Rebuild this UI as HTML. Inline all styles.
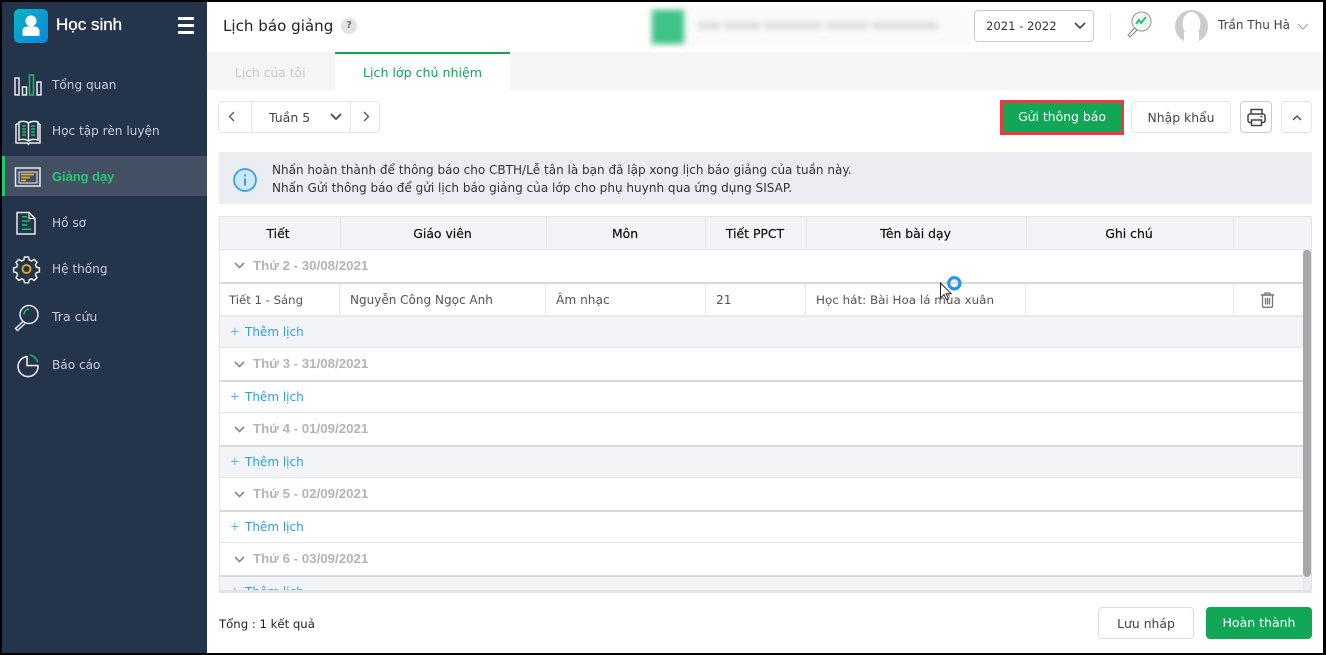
<!DOCTYPE html>
<html lang="vi"><head><meta charset="utf-8"><title>Lịch báo giảng</title>
<style>
*{box-sizing:border-box}
html,body{margin:0;padding:0;width:1326px;height:655px;overflow:hidden;background:#000}
body{font-family:"DejaVu Sans","Liberation Sans",sans-serif;font-size:12px;color:#333}
#app{position:absolute;left:2px;top:2px;width:1321px;height:651px;background:#fff;overflow:hidden}
.a{position:absolute}
.t{position:absolute;white-space:nowrap;line-height:18px}
svg{position:absolute;overflow:visible}
.nav{color:#c9ced6;font-size:12.1px;left:50px}
.th{position:absolute;top:0;height:33px;line-height:33px;text-align:center;font-weight:400;font-size:12.4px;color:#111;border-right:1px solid #e6e8ec;-webkit-text-stroke:.2px #111;padding-right:2px}
.g{position:absolute;left:0;width:1084px;background:#fff;border-bottom:2px solid #d9d9d9}
.gt{position:absolute;left:33px;font-weight:700;color:#b4b4b4;line-height:18px;white-space:nowrap;font-family:"Liberation Sans",sans-serif;font-size:13.3px}
.add{position:absolute;left:0;width:1084px;height:31px;border-bottom:1px solid #e4e4e4;color:#2a9fe8;font-size:12px}
.add span{position:absolute;left:25px;top:6px;line-height:18px;white-space:nowrap}
.add i{position:absolute;left:10px;top:5px;font-style:normal;line-height:18px;font-size:11.5px;color:#58b4ee}
.btn{position:absolute;border:1px solid #e2e4e8;border-radius:4px;background:#fff;text-align:center;color:#444;font-size:12.4px}
.cell{position:absolute;top:0;height:31px;line-height:32px;color:#555;font-size:12.2px;white-space:nowrap;border-right:1px solid #e8e8e8}
.bar{position:absolute;top:20px;height:7px;background:#dcdcdc;filter:blur(3px)}
</style></head><body>
<div id="app">
<!-- sidebar -->
<div class="a" style="left:0;top:0;width:205px;height:651px;background:#24344b"></div>
<div class="a" style="left:0;top:154px;width:205px;height:40px;background:#435064"></div>
<div class="a" style="left:0;top:154px;width:3px;height:40px;background:#1ecb6b"></div>
<div class="a" style="left:12px;top:7px;width:34px;height:34px;border-radius:5px;background:linear-gradient(135deg,#0db4c4,#0a86e0)"></div>
<svg style="left:12px;top:7px" width="34" height="34"><circle cx="17" cy="12" r="5.5" fill="#fff"/><path d="M8.500 26v-4c0-3 2.500-4.500 5-4.500h7c2.500 0 5 1.500 5 4.500v4c0 .6-.4 .9-1 .9H9.500c-.6 0-1-.3-1-.9z" fill="#fff"/></svg>
<div class="t" style="left:54px;top:14px;color:#fff;-webkit-text-stroke:.3px #fff;font-family:'Liberation Sans',sans-serif;font-size:17px">Học sinh</div>
<div class="a" style="left:176px;top:15px;width:16px;height:3px;background:#fff"></div>
<div class="a" style="left:176px;top:22px;width:16px;height:3px;background:#fff"></div>
<div class="a" style="left:176px;top:29px;width:16px;height:3px;background:#fff"></div>

<svg style="left:0;top:0" width="205" height="400" fill="none" stroke="#e8eaee" stroke-width="1.500">
<!-- Tong quan -->
<rect x="13" y="76" width="4" height="17"/><rect x="20.500" y="85" width="4" height="8"/>
<rect x="27.500" y="73" width="4" height="20" stroke="#18c067"/><rect x="35" y="80" width="4" height="13"/>
<!-- Hoc tap -->
<path d="M14 122h3M38 122h-2M14 122v19h11.500l1 1.500 1-1.500H38v-19"/><path d="M17 120c3-1 7-1 9.500 1 2.500-2 6.500-2 9.500-1v18c-3-1-7-1-9.500 1-2.500-2-6.500-2-9.500-1z"/>
<path d="M20 124h4M20 127h4M20 130h4M20 133h4M29 124h4M29 127h4M29 130h4M29 133h4" stroke="#18c067" stroke-width="1.600"/>
<path d="M26.500 121v18"/>
<!-- Giang day -->
<rect x="13.500" y="166" width="24.500" height="18"/><rect x="17" y="170" width="18" height="11" stroke-width="1"/>
<path d="M19 172.500h13M19 175.500h9M19 178.500h5" stroke="#e2ad1d" stroke-width="1.800"/>
<!-- Ho so -->
<path d="M15 210.500h12l6 6V232H15z"/><path d="M27 210.500v6h6" stroke-width="1.200"/>
<path d="M20 214.700h5M20 219h8M20 223h5M20 227.300h9" stroke="#18c067" stroke-width="1.500"/>
<!-- He thong -->
<path d="M23 256h4l.7 3 2.300 1 2.700-1.600 2.800 2.800-1.600 2.700 1 2.300 3 .7v4l-3 .7-1 2.300 1.600 2.700-2.800 2.800-2.700-1.600-2.300 1-.7 3h-4l-.7-3-2.300-1-2.700 1.600-2.800-2.800 1.600-2.700-1-2.300-3-.7v-4l3-.7 1-2.300-1.600-2.700 2.800-2.800 2.700 1.600 2.300-1z" transform="translate(-.5 -1)"/>
<circle cx="24.500" cy="267" r="4" stroke="#eab308" stroke-width="1.800"/>
<!-- Tra cuu -->
<circle cx="27" cy="312.500" r="9"/><path d="M21 319.500l-7.500 7 2 2 7.500-7"/>
<path d="M22 312.500a5.300 5.300 0 0 1 5-5.500" stroke="#18c067" stroke-width="1.500"/>
<!-- Bao cao -->
<path d="M25 354.600a10 10 0 1 0 11 9H25z" stroke-width="1.600"/>
<path d="M28 353a10 10 0 0 1 7.700 7" stroke="#18c067" stroke-width="1.600"/>
</svg>

<div class="t nav" style="top:74px">Tổng quan</div>
<div class="t nav" style="top:120px">Học tập rèn luyện</div>
<div class="t nav" style="top:166px;color:#21c970;font-weight:700;font-family:'Liberation Sans',sans-serif;font-size:12.900px">Giảng dạy</div>
<div class="t nav" style="top:212px">Hồ sơ</div>
<div class="t nav" style="top:258px">Hệ thống</div>
<div class="t nav" style="top:306px;font-size:12.500px">Tra cứu</div>
<div class="t nav" style="top:354px">Báo cáo</div>

<!-- header -->
<div class="a" style="left:205px;top:0;width:1116px;height:50px;background:#fff;box-shadow:0 1px 3px rgba(0,0,0,.08)"></div>
<div class="t" style="left:221px;top:15px;font-size:15.100px;color:#222">Lịch báo giảng</div>
<div class="a" style="left:339px;top:16px;width:16px;height:16px;border-radius:50%;background:#e2e2e2;color:#777;font-size:10px;line-height:16px;text-align:center;font-weight:700">?</div>
<div class="a" style="left:646px;top:4px;width:322px;height:42px;background:#fafafa;filter:blur(2px)"></div>
<div class="a" style="left:650px;top:8px;width:32px;height:34px;background:#3fc388;filter:blur(3px)"></div>
<div class="bar" style="left:696px;width:22px"></div>
<div class="bar" style="left:722px;width:36px"></div>
<div class="bar" style="left:762px;width:58px"></div>
<div class="bar" style="left:824px;width:42px"></div>
<div class="bar" style="left:870px;width:66px"></div>
<div class="a" style="left:972px;top:8px;width:120px;height:32px;border:1px solid #c9c9c9;border-radius:4px;background:#fff"></div>
<div class="t" style="left:984px;top:15px;font-size:11.600px;color:#333">2021 - 2022</div>
<svg style="left:1072px;top:20px" width="12" height="8" fill="none" stroke="#444" stroke-width="1.600"><path d="M1 1l5 5 5-5"/></svg>
<div class="a" style="left:1108px;top:12px;width:1px;height:26px;background:#e4e4e4"></div>
<svg style="left:1124px;top:8px" width="30" height="30" fill="none"><circle cx="15.500" cy="11.500" r="9.500" fill="#f3f7f4" stroke="#999" stroke-width="1.100"/><path d="M10 14l3-4 2 3 5-6" stroke="#22c66c" stroke-width="2"/><path d="M8.500 18L2 25l2 2 7-7z" fill="#fff" stroke="#888" stroke-width="1.100"/></svg>
<div class="a" style="left:1173px;top:8px;width:33px;height:33px;border-radius:50%;background:radial-gradient(ellipse 9px 12px at 50% 42%,#fff 96%,#ccc 100%)"></div>
<div class="a" style="left:1182px;top:30px;width:15px;height:12px;background:#fff"></div>
<div class="t" style="left:1216px;top:14px;font-size:12px;color:#444">Trần Thu Hà</div>
<svg style="left:1295px;top:21px" width="12" height="7" fill="none" stroke="#aaa" stroke-width="1.200"><path d="M1 1l5 5 5-5"/></svg>

<!-- tabs -->
<div class="a" style="left:205px;top:50px;width:1116px;height:38px;background:#f5f5f5"></div>
<div class="a" style="left:333px;top:50px;width:175px;height:38px;background:#fff;border-top:2px solid #12a150"></div>
<div class="t" style="left:233px;top:62px;font-size:12.300px;color:#c8c8c8">Lịch của tôi</div>
<div class="t" style="left:361px;top:62px;font-size:12.600px;color:#13a354">Lịch lớp chủ nhiệm</div>

<!-- toolbar -->
<div class="a" style="left:216px;top:99px;width:162px;height:32px;border:1px solid #e2e4e8;border-radius:4px"></div>
<div class="a" style="left:249px;top:99px;width:100px;height:32px;border:1px solid #e2e4e8;border-radius:4px"></div>
<svg style="left:226px;top:109px" width="8" height="11" fill="none" stroke="#555" stroke-width="1.300"><path d="M6 1L1.500 5.500 6 10"/></svg>
<div class="t" style="left:267px;top:107px;font-size:12.500px;color:#444">Tuần 5</div>
<svg style="left:328px;top:111px" width="12" height="8" fill="none" stroke="#444" stroke-width="1.700"><path d="M1 1l5 5 5-5"/></svg>
<svg style="left:360px;top:109px" width="8" height="11" fill="none" stroke="#555" stroke-width="1.300"><path d="M2 1l4.500 4.500L2 10"/></svg>

<div class="a" style="left:998px;top:98px;width:124px;height:35px;background:#12a757;border:3px solid #f0393f;color:#fff;text-align:center;line-height:28px;font-size:12.400px">Gửi thông báo</div>
<div class="btn" style="left:1129px;top:99px;width:100px;height:32px;line-height:32px">Nhập khẩu</div>
<div class="btn" style="left:1238px;top:99px;width:32px;height:32px;border-color:#ccc"></div>
<svg style="left:1245px;top:106px" width="19" height="19" fill="none" stroke="#444" stroke-width="1.500"><path d="M4 6V1.500h11V6"/><rect x="1" y="6" width="17" height="8.500" rx="2"/><path d="M4.500 12h10v5.500h-10z" fill="#fff"/><path d="M13.500 8.500h2"/></svg>
<div class="btn" style="left:1279px;top:99px;width:31px;height:32px"></div>
<svg style="left:1290px;top:113px" width="10" height="6" fill="none" stroke="#444" stroke-width="1.300"><path d="M1 5l4-4 4 4"/></svg>

<!-- info -->
<div class="a" style="left:217px;top:150px;width:1093px;height:52px;background:#ebedf2"></div>
<svg style="left:230px;top:165px" width="26" height="26"><circle cx="13" cy="13" r="11" fill="#cfe6f8" stroke="#2ba0ea" stroke-width="1.700"/><rect x="12" y="11.500" width="2" height="7" fill="#2ba0ea"/><rect x="12" y="7.500" width="2" height="2" fill="#2ba0ea"/></svg>
<div class="t" style="left:270px;top:159px;font-size:12.020px;color:#333">Nhấn hoàn thành để thông báo cho CBTH/Lễ tân là bạn đã lập xong lịch báo giảng của tuần này.</div>
<div class="t" style="left:270px;top:177px;font-size:12.050px;color:#333">Nhấn Gửi thông báo để gửi lịch báo giảng của lớp cho phụ huynh qua ứng dụng SISAP.</div>

<!-- table -->
<div class="a" style="left:217px;top:214px;width:1093px;height:377px;border:1px solid #e4e4e4;border-bottom:3px solid #e4e4e4;overflow:hidden;background:#fff">
 <div class="a" style="left:0;top:0;width:1093px;height:33px;background:#f3f4f8;border-bottom:1px solid #e4e6ea">
  <div class="th" style="left:0;width:121px;padding-right:4px">Tiết</div>
  <div class="th" style="left:121px;width:206px">Giáo viên</div>
  <div class="th" style="left:327px;width:159px">Môn</div>
  <div class="th" style="left:486px;width:101px">Tiết PPCT</div>
  <div class="th" style="left:587px;width:220px">Tên bài dạy</div>
  <div class="th" style="left:807px;width:207px">Ghi chú</div>
 </div>

 <div class="g" style="top:33px;height:34px"><svg style="left:14px;top:12px" width="11" height="7" fill="none" stroke="#888" stroke-width="1.600"><path d="M1 1l4.500 4.500L10 1"/></svg><div class="gt" style="top:7px">Thứ 2 - 30/08/2021</div></div>
 <div class="a" style="left:0;top:67px;width:1084px;height:33px;border-bottom:2px solid #e8e8e8">
  <div class="cell" style="left:0;width:120px;padding-left:9px;font-size:11.700px">Tiết 1 - Sáng</div>
  <div class="cell" style="left:120px;width:206px;padding-left:10px;font-size:12.030px">Nguyễn Công Ngọc Anh</div>
  <div class="cell" style="left:326px;width:160px;padding-left:10px">Âm nhạc</div>
  <div class="cell" style="left:486px;width:100px;padding-left:10px">21</div>
  <div class="cell" style="left:586px;width:220px;padding-left:10px;font-size:11.930px">Học hát: Bài Hoa lá mùa xuân</div>
  <div class="cell" style="left:806px;width:208px"></div>
  <svg style="left:1040px;top:8px" width="15" height="16" fill="none" stroke="#777" stroke-width="1.300"><path d="M1 3h13" stroke-width="1.600"/><path d="M5 3V1h5v2"/><path d="M2.500 3.500v10.500c0 .8.500 1.300 1.200 1.300h7.600c.7 0 1.200-.5 1.200-1.300V3.500"/><path d="M5.500 6v6.500M7.500 6v6.500M9.500 6v6.500"/></svg>
 </div>
 <div class="add" style="top:100px;background:#f3f4f8"><i>+</i><span>Thêm lịch</span></div>

 <div class="g" style="top:132px;height:33px"><svg style="left:14px;top:12px" width="11" height="7" fill="none" stroke="#888" stroke-width="1.600"><path d="M1 1l4.500 4.500L10 1"/></svg><div class="gt" style="top:6px">Thứ 3 - 31/08/2021</div></div>
 <div class="add" style="top:165px"><i>+</i><span>Thêm lịch</span></div>

 <div class="g" style="top:197px;height:33px"><svg style="left:14px;top:12px" width="11" height="7" fill="none" stroke="#888" stroke-width="1.600"><path d="M1 1l4.500 4.500L10 1"/></svg><div class="gt" style="top:6px">Thứ 4 - 01/09/2021</div></div>
 <div class="add" style="top:230px;background:#f3f4f8"><i>+</i><span>Thêm lịch</span></div>

 <div class="g" style="top:262px;height:33px"><svg style="left:14px;top:12px" width="11" height="7" fill="none" stroke="#888" stroke-width="1.600"><path d="M1 1l4.500 4.500L10 1"/></svg><div class="gt" style="top:6px">Thứ 5 - 02/09/2021</div></div>
 <div class="add" style="top:295px"><i>+</i><span>Thêm lịch</span></div>

 <div class="g" style="top:327px;height:33px"><svg style="left:14px;top:12px" width="11" height="7" fill="none" stroke="#888" stroke-width="1.600"><path d="M1 1l4.500 4.500L10 1"/></svg><div class="gt" style="top:6px">Thứ 6 - 03/09/2021</div></div>
 <div class="add" style="top:360px;height:32px;background:#f3f4f8;border:0"><i>+</i><span>Thêm lịch</span></div>

 <div class="a" style="left:1083px;top:33px;width:9px;height:344px;background:#ededed"></div>
 <div class="a" style="left:1083px;top:33px;width:8px;height:327px;background:#a8a8a8;border-radius:4px"></div>
</div>

<!-- cursor -->
<svg style="left:938px;top:275px" width="26" height="30"><circle cx="14.300" cy="6.300" r="5.600" fill="none" stroke="#2196f0" stroke-width="3.200"/><path d="M0.500 6v15l3.500-3.300 2.600 5 2-1-2.500-5h5z" fill="#fff" stroke="#222" stroke-width="1"/></svg>

<!-- footer -->
<div class="t" style="left:217px;top:613px;font-size:11.700px;color:#222">Tổng : 1 kết quả</div>
<div class="btn" style="left:1096px;top:605px;width:96px;height:32px;line-height:31px;border-color:#ddd">Lưu nháp</div>
<div class="a" style="left:1204px;top:605px;width:106px;height:32px;line-height:32px;background:#12a757;border-radius:4px;color:#fff;text-align:center;font-size:12.500px">Hoàn thành</div>
</div>
</body></html>
